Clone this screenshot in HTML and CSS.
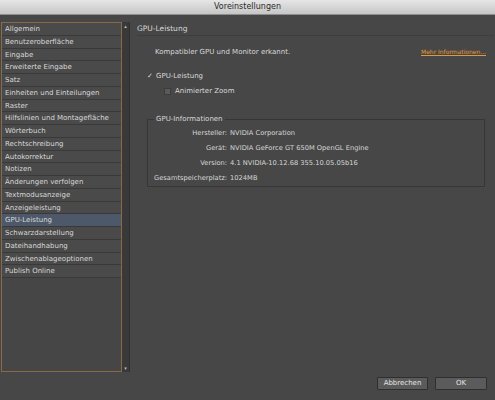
FILE: index.html
```
<!DOCTYPE html>
<html lang="de">
<head>
<meta charset="utf-8">
<title>Voreinstellungen</title>
<link rel="stylesheet" href="styles.css">
</head>
<body>
<div class="window">
  <div class="titlebar">Voreinstellungen</div>
  <div class="main">
    <div class="side">
      <ul class="list">
        <li>Allgemein</li>
        <li>Benutzeroberfläche</li>
        <li>Eingabe</li>
        <li>Erweiterte Eingabe</li>
        <li>Satz</li>
        <li>Einheiten und Einteilungen</li>
        <li>Raster</li>
        <li>Hilfslinien und Montagefläche</li>
        <li>Wörterbuch</li>
        <li>Rechtschreibung</li>
        <li>Autokorrektur</li>
        <li>Notizen</li>
        <li>Änderungen verfolgen</li>
        <li>Textmodusanzeige</li>
        <li>Anzeigeleistung</li>
        <li class="sel">GPU-Leistung</li>
        <li>Schwarzdarstellung</li>
        <li>Dateihandhabung</li>
        <li>Zwischenablageoptionen</li>
        <li>Publish Online</li>
      </ul>
      <div class="scroll">
        <span class="arrow">▴</span>
        <span class="arrow">▾</span>
      </div>
    </div>
    <div class="content">
      <div class="head">GPU-Leistung</div>
      <div class="row-info">
        <span>Kompatibler GPU und Monitor erkannt.</span>
        <span class="link">Mehr Informationen...</span>
      </div>
      <div class="check"><span class="tick">✓</span>GPU-Leistung</div>
      <div class="check sub"><span class="box"></span>Animierter Zoom</div>
      <fieldset class="group">
        <legend>GPU-Informationen</legend>
        <div class="grid">
          <span class="lbl">Hersteller:</span><span>NVIDIA Corporation</span>
          <span class="lbl">Gerät:</span><span>NVIDIA GeForce GT 650M OpenGL Engine</span>
          <span class="lbl">Version:</span><span>4.1 NVIDIA-10.12.68 355.10.05.05b16</span>
          <span class="lbl">Gesamtspeicherplatz:</span><span>1024MB</span>
        </div>
      </fieldset>
    </div>
  </div>
  <div class="buttons">
    <span class="btn">Abbrechen</span>
    <span class="btn ok">OK</span>
  </div>
</div>
</body>
</html>
```
FILE: styles.css
```
* { box-sizing: border-box; }
html, body { margin: 0; padding: 0; }
body {
  width: 495px;
  height: 400px;
  background: #474747;
  font-family: "DejaVu Sans", "Liberation Sans", sans-serif;
  font-size: 7px;
  color: #d8d8d8;
  overflow: hidden;
}
.window { width: 495px; height: 400px; display: flex; flex-direction: column; }
.titlebar {
  height: 15px;
  background: linear-gradient(#e6e6e6, #c6c6c6);
  border-bottom: 1px solid #8e8e8e;
  color: #2a2a2a;
  font-size: 8px;
  text-align: center;
  line-height: 14px;
}
.main { display: flex; padding-top: 7px; height: 357px; }
.side { display: flex; margin-left: 1px; height: 350px; }
.list {
  list-style: none;
  margin: 0;
  padding: 0;
  width: 121px;
  height: 350px;
  border: 1px solid #8a6a46;
  background: #464646;
}
.list li {
  height: 12.75px;
  line-height: 12px;
  padding-left: 3px;
  border-bottom: 1px solid #393939;
  background: #4a4a4a;
  white-space: nowrap;
}
.list li.sel { background: #4d586a; }
.scroll {
  width: 8px;
  background: #393939;
  border-right: 1px solid #303030;
  display: flex;
  flex-direction: column;
  justify-content: space-between;
  align-items: center;
  padding: 1px 0;
}
.arrow { font-size: 5px; color: #bdbdbd; line-height: 6px; }
.content { flex: 1; padding-left: 7px; display: flex; flex-direction: column; }
.head {
  height: 14px;
  line-height: 14px;
  border-bottom: 1px solid #3e3e3e;
  font-size: 7.5px;
  margin-right: 1px;
}
.row-info {
  display: flex;
  justify-content: space-between;
  align-items: baseline;
  padding: 10px 9px 0 18px;
  line-height: 12px;
}
.link { color: #e0993c; text-decoration: underline; font-size: 6px; }
.check { display: flex; align-items: center; padding-left: 10px; margin-top: 12px; line-height: 12px; }
.tick { width: 9px; font-size: 7px; }
.check.sub { padding-left: 27px; margin-top: 3px; }
.box {
  width: 7px; height: 7px;
  background: #5a5a5a;
  border: 1px solid #3c3c3c;
  margin-right: 4px;
}
.group {
  margin: 18px 10px 0 10px;
  padding: 4px 0 7px 6px;
  border: 1px solid #363636;
  height: 72px;
}
.group legend { padding: 0 2px; margin-left: 0; line-height: 8px; }
.grid {
  display: grid;
  grid-template-columns: max-content auto;
  column-gap: 3px;
  row-gap: 3px;
  line-height: 12px;
  font-size: 6.7px;
  justify-content: start;
}
.lbl { text-align: right; }
.buttons {
  display: flex;
  justify-content: flex-end;
  gap: 7px;
  padding: 5px 8px 0 0;
}
.btn {
  width: 51px;
  height: 13px;
  line-height: 11px;
  text-align: center;
  background: #5b5b5b;
  border: 1px solid #2f2f2f;
  border-radius: 1px;
  color: #e4e4e4;
}
.btn.ok { width: 52px; }
```
